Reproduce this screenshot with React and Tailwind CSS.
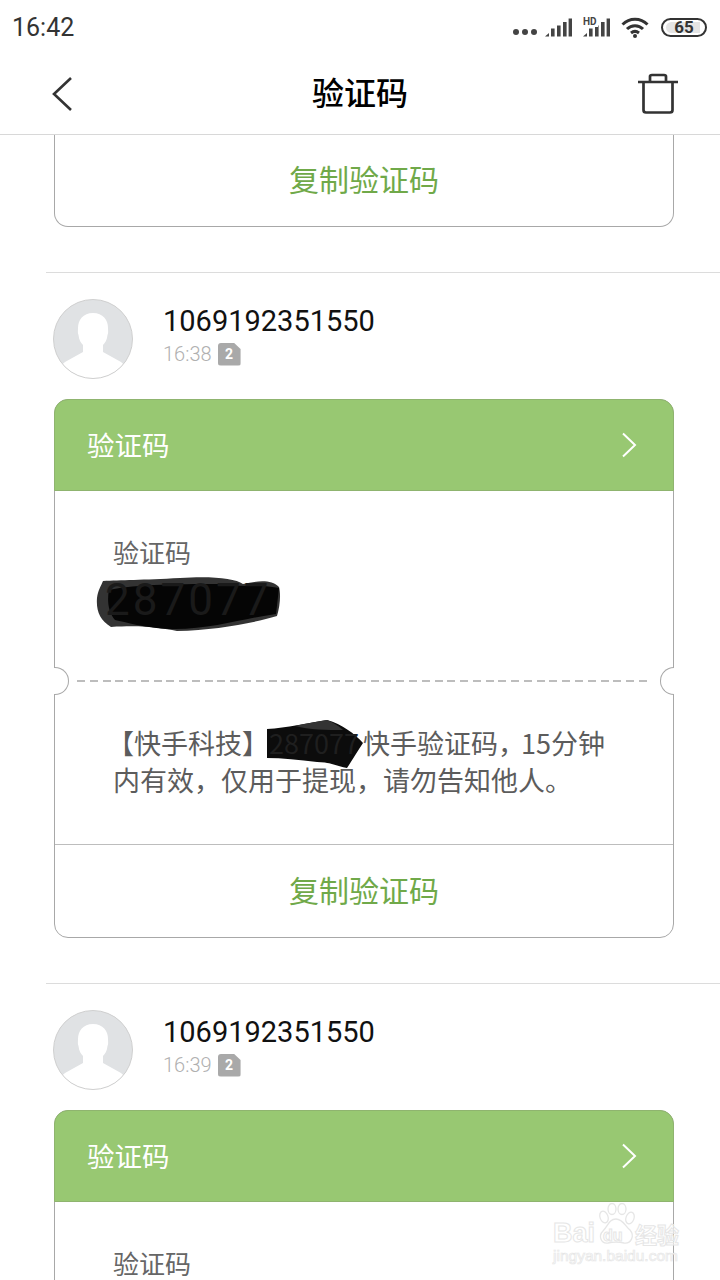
import React from "react";

const CJK = "[font-family:'Noto_Sans_CJK_SC','Noto_Sans',sans-serif]";

function Dots() {
  return (
    <svg width="24" height="8" viewBox="0 0 24 8" className="mt-[10px]">
      <circle cx="3" cy="4" r="3" fill="#444" />
      <circle cx="12" cy="4" r="3" fill="#444" />
      <circle cx="21" cy="4" r="3" fill="#444" />
    </svg>
  );
}

function Signal({ hd }) {
  return (
    <div className="relative w-[27px] h-[19px]">
      <svg width="27" height="19" viewBox="0 0 27 19" className="block">
        <path d="M0 18.5 L4 15 V18.5 Z" fill="#444" />
        <rect x="6" y="10.5" width="3.6" height="8" fill="#444" />
        <rect x="12" y="7.5" width="3.6" height="11" fill="#444" />
        <rect x="18" y="4" width="3.6" height="14.5" fill="#444" />
        <rect x="23.6" y="0.5" width="3.4" height="18" fill="#444" />
      </svg>
      {hd && (
        <span className="absolute left-0 top-[-2px] bg-white pr-[1px] text-[10px] leading-[11px] font-bold text-[#444] [font-family:Roboto,sans-serif]">
          HD
        </span>
      )}
    </div>
  );
}

function Wifi() {
  return (
    <svg width="28" height="21" viewBox="0 0 28 21" fill="none" stroke="#333" strokeWidth="3">
      <path d="M1.5 7.5 C8.5 0.5 19.5 0.5 26.5 7.5" />
      <path d="M6 12 C10.5 7.5 17.5 7.5 22 12" />
      <path d="M10 16 C12.5 14 15.5 14 18 16" />
      <circle cx="14" cy="19" r="2" fill="#333" stroke="none" />
    </svg>
  );
}

function Battery() {
  return (
    <div className="relative w-[46px] h-[19px] rounded-full border-[2px] border-[#333] bg-white overflow-hidden flex items-center justify-center">
      <div className="absolute left-[3px] top-[2px] bottom-[2px] right-[5px] rounded-l-full rounded-r-[6px] bg-[#e4e4e4]" />
      <span className="relative text-[17px] leading-none font-bold text-[#333] [font-family:Roboto,sans-serif]">65</span>
    </div>
  );
}

function Avatar() {
  return (
    <svg width="80" height="80" viewBox="0 0 80 80" className="shrink-0 block">
      <defs>
        <clipPath id="avatarClip">
          <circle cx="40" cy="40" r="39.5" />
        </clipPath>
      </defs>
      <circle cx="40" cy="40" r="39.5" fill="#e0e2e4" />
      <g clipPath="url(#avatarClip)">
        <path
          d="M40 14 C50 14 55 21 55 29 C55 32 55.5 34 54.5 36 C54 41 52 44 50 46 V53 L68 63 C72 66 74 70 76 80 H4 C6 70 8 66 12 63 L30 53 V46 C28 44 26 41 25.5 36 C24.5 34 25 32 25 29 C25 21 30 14 40 14 Z"
          fill="#ffffff"
        />
      </g>
      <circle cx="40" cy="40" r="39.5" fill="none" stroke="#cfcfcf" strokeWidth="1" />
    </svg>
  );
}

function SimBadge() {
  return (
    <div className="relative w-[23px] h-[23px] bg-[#a9a9a9] rounded-[3px] [clip-path:polygon(0_0,70%_0,100%_28%,100%_100%,0_100%)] flex items-center justify-center">
      <span className="text-white text-[14px] leading-none font-bold [font-family:Roboto,sans-serif]">2</span>
    </div>
  );
}

function Notch({ side }) {
  return side === "left" ? (
    <div className="absolute left-[-1px] top-[-14px] w-[15px] h-[28px] bg-white border border-l-0 border-[#a8a8a8] rounded-r-full" />
  ) : (
    <div className="absolute right-[-1px] top-[-14px] w-[14px] h-[28px] bg-white border border-r-0 border-[#a8a8a8] rounded-l-full" />
  );
}

function CopyButton({ className }) {
  return (
    <div className={`flex items-center justify-center text-[30px] text-[#70a949] ${className}`}>
      <span className="relative top-[-2px]">复制验证码</span>
    </div>
  );
}

function Message({ time }) {
  return (
    <section className="ml-[46px] border-t border-[#dcdcdc] pt-[26px] pb-[45px]">
      <div className="flex ml-[7px]">
        <Avatar />
        <div className="ml-[30px] flex flex-col">
          <div className="text-[29px] leading-[38px] mt-[3px] text-[#111] [font-family:Roboto,sans-serif]">1069192351550</div>
          <div className="flex items-center mt-[2px]">
            <span className="text-[20px] leading-[24px] text-[#b0b0b0] [font-family:Roboto,sans-serif] font-light">{time}</span>
            <div className="ml-[6px]">
              <SimBadge />
            </div>
          </div>
        </div>
      </div>

      <div className="relative mt-[20px] ml-[8px] w-[620px] h-[539px] border border-[#a8a8a8] rounded-[14px] flex flex-col">
        <div className="h-[92px] shrink-0 -mx-px -mt-px bg-[#98c872] rounded-t-[14px] flex items-center justify-between pl-[32px] pr-[36px] border border-[#8fb46f]">
          <span className="text-[27.5px] text-white">验证码</span>
          <svg width="16" height="26" viewBox="0 0 16 26" fill="none" stroke="#fff" strokeWidth="2">
            <path d="M2 1.5 L14 13 L2 24.5" />
          </svg>
        </div>

        <div className="relative h-[189px] shrink-0 pl-[58px] pt-[43px]">
          <div className="text-[26px] leading-[36px] text-[#666]">验证码</div>
          <svg width="190" height="60" viewBox="0 0 190 60" className="absolute left-[40px] top-[85px]">
            <path
              d="M8 5 C25 4 48 4 85 2 C115 0 140 2 148 8 C162 5 176 3 184 11 C186 18 185 30 182 40 C155 48 120 54 82 55 C65 52 50 49 16 51 C5 44 1 35 2 22 C3 14 6 10 8 5 Z"
              fill="#333"
            />
            <path
              d="M14 14 C40 8 90 8 130 8 C150 12 165 8 184 12 L181 38 C150 42 115 54 75 53 C50 52 30 46 20 44 C13 36 12 24 14 14 Z"
              fill="#050505"
            />
          </svg>
          <div className="relative z-10 text-[44px] leading-[50px] mt-[5px] -ml-[8px] tracking-[3px] text-[#1a1a1a] [font-family:Roboto,sans-serif]">287077</div>
        </div>

        <div className="relative h-[2px] shrink-0 ml-[22px] mr-[26px] bg-[repeating-linear-gradient(90deg,#bdbdbd_0_8px,transparent_8px_12.77px)]" />
        <div className="absolute left-0 right-0 top-[281px]">
          <Notch side="left" />
          <Notch side="right" />
        </div>

        <div className="relative h-[163px] shrink-0 border-b border-[#bdbdbd] pl-[58px] pt-[42px]">
          <svg width="100" height="50" viewBox="0 0 100 50" className="absolute left-[212px] top-[38px]">
            <path d="M0 9 C20 8 40 3 60 0 C75 4 88 14 96 23 C90 32 84 42 80 48 C70 46 62 42 50 42 C32 40 15 38 0 38 Z" fill="#0c0c0c" />
            <path d="M28 6 C40 3 50 2 60 0 C66 2 70 5 76 10 C60 10 42 10 28 6 Z" fill="#333" />
          </svg>
          <div className="text-[27px] leading-[37px] text-[#5c5c5c] whitespace-nowrap">
            <div>
              <span className="-ml-[6px]">【快手科技】</span>
              <span className="relative z-10 text-[#1f1f1f]">287077</span>
              <span className="ml-[4px]">快手验证码，</span>
              <span className="-ml-[4px]">15分钟</span>
            </div>
            <div>内有效，仅用于提现，请勿告知他人。</div>
          </div>
        </div>

        <CopyButton className="flex-1" />
      </div>
    </section>
  );
}

function Watermark() {
  return (
    <div className="absolute left-[553px] top-[1203px] w-[130px] h-[62px] pointer-events-none">
      <svg width="40" height="44" viewBox="0 0 40 44" fill="none" stroke="#e6e6e6" strokeWidth="1.3" className="absolute left-[43px] top-0">
        <ellipse cx="8" cy="14" rx="4" ry="6" transform="rotate(-20 8 14)" />
        <ellipse cx="16" cy="6" rx="4" ry="5.5" />
        <ellipse cx="26" cy="6" rx="4" ry="5.5" />
        <ellipse cx="34" cy="15" rx="4" ry="6" transform="rotate(20 34 15)" />
        <path d="M20 16 C27 16 29 23 34 27 C39 33 35 41 28 40 C23 39 17 39 12 40 C5 41 2 33 7 28 C12 23 13 16 20 16 Z" />
      </svg>
      <span className="absolute left-[50px] top-[24px] text-[16px] leading-[18px] font-bold text-transparent [-webkit-text-stroke:1px_#e6e6e6] [font-family:'Liberation_Sans',sans-serif]">du</span>
      <span className="absolute left-0 top-[16px] text-[27px] leading-[28px] font-bold text-white/60 [-webkit-text-stroke:1px_#e6e6e6] [font-family:'Liberation_Sans',sans-serif]">Bai</span>
      <span className="absolute left-[82px] top-[18px] text-[22px] leading-[24px] font-bold text-white/60 [-webkit-text-stroke:1px_#e6e6e6]">经验</span>
      <span className="absolute left-0 top-[44px] text-[15.5px] leading-[18px] text-white/40 [-webkit-text-stroke:0.7px_#e6e6e6] [font-family:'Liberation_Sans',sans-serif] whitespace-nowrap">jingyan.baidu.com</span>
    </div>
  );
}

export default function App() {
  return (
    <div className={`relative w-[720px] h-[1280px] overflow-hidden bg-white flex flex-col ${CJK}`}>
      <div className="h-[54px] shrink-0 flex items-center justify-between pl-3 pr-[13px]">
        <span className="text-[25px] leading-none text-[#333] [font-family:Roboto,sans-serif]">16:42</span>
        <div className="flex items-center">
          <Dots />
          <div className="ml-[8px]"><Signal /></div>
          <div className="ml-[11px]"><Signal hd /></div>
          <div className="ml-[11px]"><Wifi /></div>
          <div className="ml-[12px]"><Battery /></div>
        </div>
      </div>

      <div className="relative h-[81px] shrink-0 border-b border-[#d8d8d8] flex items-center justify-between pl-[51px] pr-[41px]">
        <svg width="22" height="36" viewBox="0 0 22 36" fill="none" stroke="#333" strokeWidth="2.6">
          <path d="M20 2 L3 18 L20 34" />
        </svg>
        <span className="absolute left-0 right-0 top-[15px] text-center text-[32px] leading-[44px] font-medium text-black">验证码</span>
        <svg width="42" height="42" viewBox="0 0 42 42" fill="none" stroke="#333" strokeWidth="2.7">
          <path d="M1 9 H41" />
          <path d="M6.5 9 V37 Q6.5 39.5 9 39.5 H33 Q35.5 39.5 35.5 37 V9" />
          <path d="M13 9 V3.5 Q13 2 15 2 H27 Q29 2 29 3.5 V9" />
        </svg>
      </div>

      <div className="flex-1 min-h-0 overflow-hidden">
        <div className="ml-[54px] w-[620px] h-[92px] border-x border-b border-[#a8a8a8] rounded-b-[14px] flex items-center justify-center">
          <CopyButton className="" />
        </div>
        <div className="mt-[45px]">
          <Message time="16:38" />
          <Message time="16:39" />
        </div>
      </div>

      <Watermark />
    </div>
  );
}
